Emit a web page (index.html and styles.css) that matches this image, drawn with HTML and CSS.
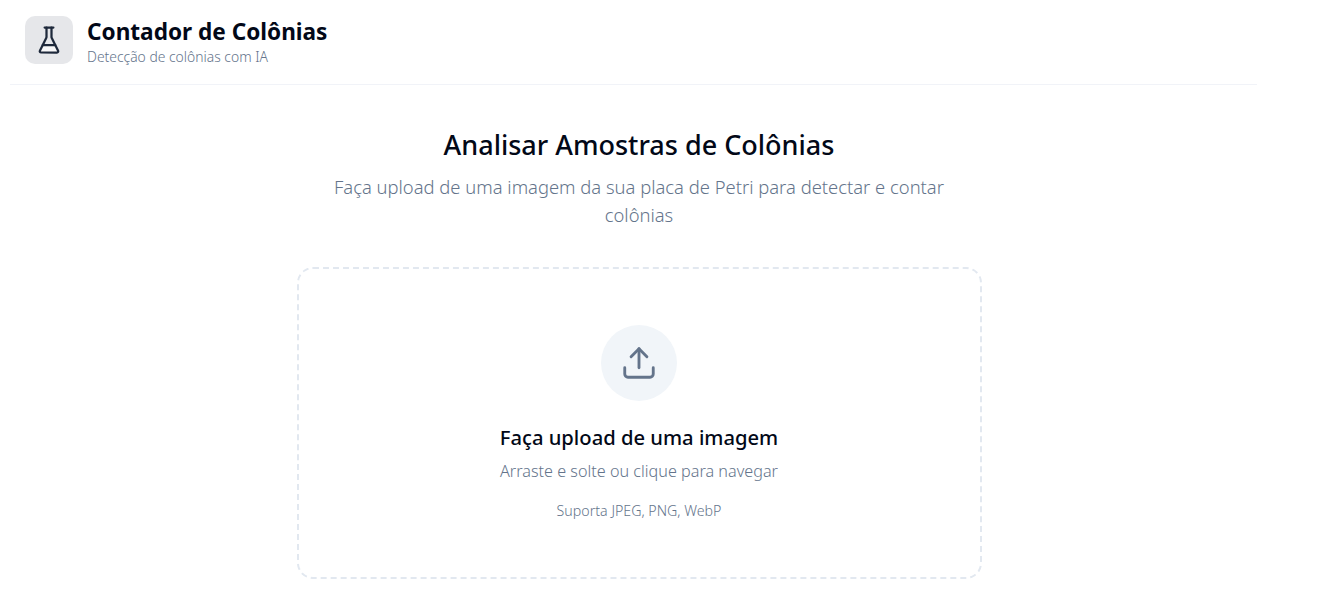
FILE: index.html
```html
<!DOCTYPE html>
<html lang="pt-BR">
<head>
    <meta charset="UTF-8">
    <title>Contador de Colônias</title>
    <link rel="stylesheet" href="styles.css">
</head>
<body>
<div class="page">
    <header class="top">
        <div class="logo">
            <svg width="30" height="30" viewBox="0 0 24 24" fill="none" stroke="currentColor" stroke-width="1.8" stroke-linecap="round" stroke-linejoin="round">
                <path class="liquid" d="M7 16h10l2.6 5.5H4.4z"/>
                <path d="M10 2v7.53a2 2 0 0 1-.21.9L4.72 20.55A1 1 0 0 0 5.61 22h12.78a1 1 0 0 0 .89-1.45l-5.07-10.12a2 2 0 0 1-.21-.9V2"/>
                <path d="M8.5 2h7"/>
                <path d="M7 16h10"/>
            </svg>
        </div>
        <div class="brand-text">
            <h1 class="brand">Contador de Colônias</h1>
            <p class="brand-sub">Detecção de colônias com IA</p>
        </div>
    </header>
    <main class="content">
        <h2 class="title">Analisar Amostras de Colônias</h2>
        <p class="lead">Faça upload de uma imagem da sua placa de Petri para detectar e contar colônias</p>
        <div class="drop">
            <div class="drop-icon">
                <svg width="38" height="38" viewBox="0 0 24 24" fill="none" stroke="currentColor" stroke-width="1.8" stroke-linecap="round" stroke-linejoin="round">
                    <path d="M12 3v12"/>
                    <path d="m17 8-5-5-5 5"/>
                    <path d="M21 15v4a2 2 0 0 1-2 2H5a2 2 0 0 1-2-2v-4"/>
                </svg>
            </div>
            <h3 class="drop-title">Faça upload de uma imagem</h3>
            <p class="drop-text">Arraste e solte ou clique para navegar</p>
            <p class="drop-note">Suporta JPEG, PNG, WebP</p>
        </div>
    </main>
</div>
</body>
</html>
```

FILE: styles.css
```css
* {
    padding: 0;
    margin: 0;
    box-sizing: border-box;
}

body {
    background: #fff;
    color: #020817;
    font-family: "Noto Sans", sans-serif;
}

.page {
    width: 1278px;
}

.top {
    display: flex;
    align-items: center;
    gap: 14px;
    height: 85px;
    margin: 0 21px 0 10px;
    padding: 0 15px 5px;
    border-bottom: 1px solid #f1f3f8;
}

.logo {
    display: flex;
    align-items: center;
    justify-content: center;
    width: 48px;
    height: 48px;
    border-radius: 10px;
    background: #e6e7ea;
    color: #1e293b;
}

.liquid {
    fill: #f8f8f9;
    stroke: none;
}

.brand-text {
    padding-top: 4px;
}

.brand {
    font-size: 22.6px;
    line-height: 30px;
    font-weight: 700;
}

.brand-sub {
    margin-top: 1px;
    font-size: 13.9px;
    line-height: 18px;
    font-weight: 300;
    color: #64748b;
}

.content {
    display: flex;
    flex-direction: column;
    align-items: center;
}

.title {
    margin-top: 42px;
    font-size: 27px;
    line-height: 36px;
    font-weight: 500;
}

.lead {
    width: 640px;
    margin-top: 10px;
    font-size: 18.4px;
    line-height: 28px;
    font-weight: 300;
    color: #64748b;
    text-align: center;
}

.drop {
    display: flex;
    flex-direction: column;
    align-items: center;
    width: 685px;
    height: 312px;
    margin-top: 38px;
    padding-top: 56px;
    border: 2px dashed #e2e8f0;
    border-radius: 16px;
}

.drop-icon {
    display: flex;
    align-items: center;
    justify-content: center;
    width: 76px;
    height: 76px;
    border-radius: 50%;
    background: #f1f5f9;
    color: #64748b;
}

.drop-title {
    margin-top: 22px;
    font-size: 20.2px;
    line-height: 28px;
    font-weight: 500;
}

.drop-text {
    margin-top: 8px;
    font-size: 16.2px;
    line-height: 24px;
    font-weight: 300;
    color: #64748b;
}

.drop-note {
    margin-top: 19px;
    font-size: 14.2px;
    line-height: 18px;
    font-weight: 300;
    color: #64748b;
}
```
